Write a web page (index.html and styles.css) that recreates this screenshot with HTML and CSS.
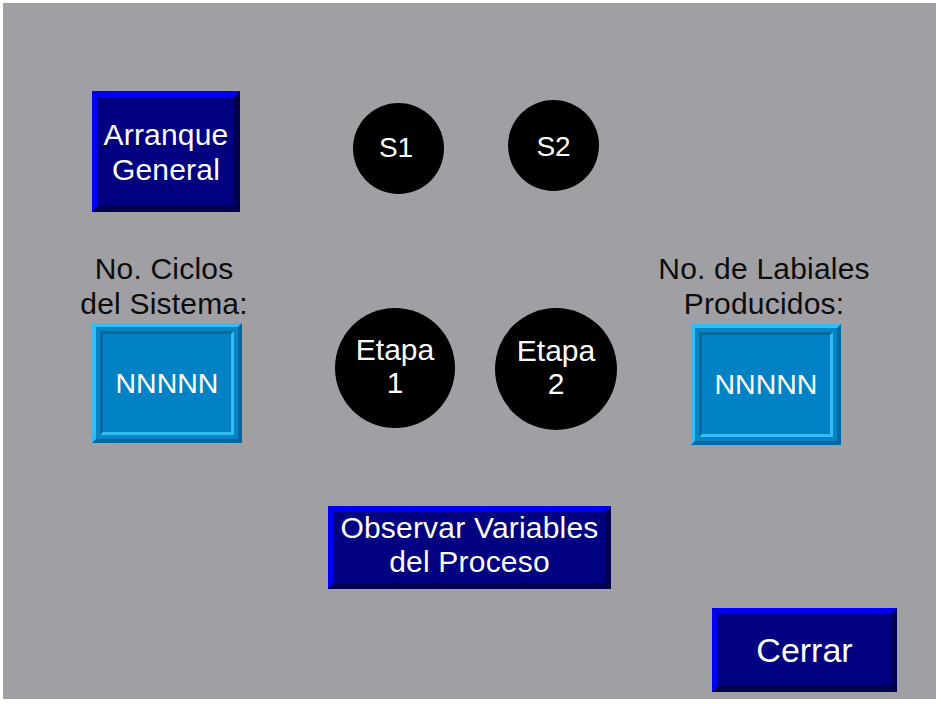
FILE: index.html
```html
<!DOCTYPE html>
<html lang="es">
<head>
<meta charset="utf-8">
<title>Pantalla de proceso</title>
<link rel="stylesheet" href="styles.css">
</head>
<body>
<main class="screen">
  <div class="row row-top">
    <button class="btn btn-start">Arranque<br>General</button>
    <div class="lamp lamp-s1">S1</div>
    <div class="lamp lamp-s2">S2</div>
  </div>

  <div class="row row-mid">
    <div class="counter counter-left">
      <div class="counter-label">No. Ciclos<br>del Sistema:</div>
      <div class="display"><div class="display-in">NNNNN</div></div>
    </div>
    <div class="stage stage-1">Etapa<br>1</div>
    <div class="stage stage-2">Etapa<br>2</div>
    <div class="counter counter-right">
      <div class="counter-label">No. de Labiales<br>Producidos:</div>
      <div class="display"><div class="display-in">NNNNN</div></div>
    </div>
  </div>

  <div class="row row-obs">
    <button class="btn btn-obs">Observar Variables<br>del Proceso</button>
  </div>

  <div class="row row-close">
    <button class="btn btn-close">Cerrar</button>
  </div>
</main>
</body>
</html>
```

FILE: styles.css
```css
* { box-sizing: border-box; }

html, body {
  margin: 0;
  padding: 0;
  background: #ffffff;
}

body {
  font-family: "Liberation Sans", Arial, sans-serif;
}

.screen {
  margin: 3px 0 0 3px;
  width: 933px;
  height: 696px;
  background: #a09fa4;
  padding-top: 88px;
  display: flex;
  flex-direction: column;
}

.row {
  display: flex;
  align-items: flex-start;
}

/* bevelled navy buttons */
.btn {
  font-family: "Liberation Sans", Arial, sans-serif;
  font-size: 30px;
  letter-spacing: 0.2px;
  line-height: 35px;
  color: #ffffff;
  background: #000080;
  border-style: solid;
  border-width: 6px;
  border-top-color: #0000f4;
  border-left-color: #0000f4;
  border-right-color: #00004e;
  border-bottom-color: #00004e;
  padding: 0;
  margin: 0;
  display: flex;
  align-items: center;
  justify-content: center;
  text-align: center;
}

.btn-start {
  margin-left: 89px;
  width: 148px;
  height: 121px;
  padding-bottom: 0;
}

.lamp {
  width: 91px;
  height: 91px;
  border-radius: 50%;
  background: #000000;
  color: #ffffff;
  font-size: 28px;
  display: flex;
  align-items: center;
  justify-content: center;
  padding-bottom: 2px;
}

.lamp-s1 { margin-left: 113px; margin-top: 12px; padding-right: 5px; }
.lamp-s2 { margin-left: 64px; margin-top: 9px; padding-top: 3px; padding-bottom: 0; }

.row-mid { margin-top: 37px; }

.counter {
  width: 150px;
  display: flex;
  flex-direction: column;
  align-items: center;
  gap: 2px;
}

.counter-left { margin-left: 89px; }
.counter-right { margin-left: 74px; }

.counter-label {
  font-size: 30px;
  letter-spacing: 0.2px;
  line-height: 35px;
  color: #0c0c0c;
  text-align: center;
  white-space: nowrap;
  padding-top: 2px;
}

.counter-left .counter-label { margin-right: 6px; }
.counter-right .counter-label { margin-right: 4px; }

.display {
  width: 150px;
  height: 120px;
  background: #0584c6;
  border-style: solid;
  border-width: 4px;
  border-top-color: #34bcf4;
  border-left-color: #34bcf4;
  border-right-color: #00679f;
  border-bottom-color: #00679f;
  padding: 4px;
}

.counter-right .display { height: 121px; margin-top: 1px; }

.display-in {
  width: 100%;
  height: 100%;
  background: #0082c4;
  border-style: solid;
  border-width: 3px;
  border-top-color: #00679f;
  border-left-color: #00679f;
  border-right-color: #34bcf4;
  border-bottom-color: #34bcf4;
  color: #ffffff;
  font-size: 28.5px;
  display: flex;
  align-items: center;
  justify-content: center;
}

.stage {
  width: 120px;
  height: 120px;
  border-radius: 50%;
  background: #000000;
  color: #ffffff;
  font-size: 30px;
  line-height: 33px;
  text-align: center;
  display: flex;
  align-items: center;
  justify-content: center;
  margin-top: 59px;
  padding-bottom: 4px;
}

.stage-1 { margin-left: 93px; }
.stage-2 { margin-left: 40px; width: 122px; height: 122px; }

.row-obs { margin-top: 61px; }

.btn-obs {
  margin-left: 325px;
  width: 283px;
  height: 83px;
  line-height: 34px;
  padding-bottom: 6px;
}

.row-close { margin-top: 19px; }

.btn-close {
  margin-left: 709px;
  width: 185px;
  height: 84px;
  font-size: 34px;
  letter-spacing: 0;
}
```
